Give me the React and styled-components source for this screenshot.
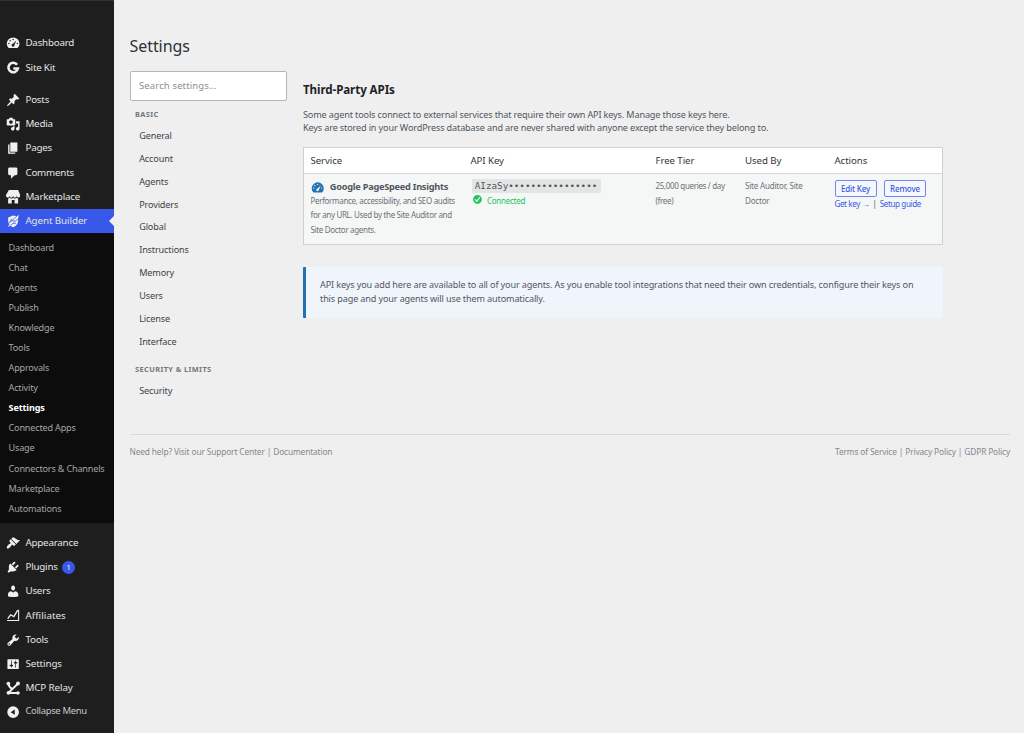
import React from "react";
import styled, { createGlobalStyle } from "styled-components";

const Global = createGlobalStyle`
  * { box-sizing: border-box; }
  body { margin: 0; background: #efefef; font-family: "Noto Sans", "Open Sans", sans-serif; color: #50575e; }
  #root { height: 733px; overflow: hidden; }
`;

const ICONS = {
  dashboard: "M3.76 17h12.48A9 9 0 0 0 19 11a9 9 0 0 0-18 0 9 9 0 0 0 2.760 6zM10 4a1 1 0 1 1 0 2 1 1 0 0 1 0-2zM4 9.500a1 1 0 1 1 0 2 1 1 0 0 1 0-2zM16 9.500a1 1 0 1 1 0 2 1 1 0 0 1 0-2zM5.800 5.600a1 1 0 1 1 0 2 1 1 0 0 1 0-2zM14.600 6.200L11.800 12.600a2 2 0 1 1-1.900-1.600z",
  post: "M10.44 3.02l1.82-1.82 6.36 6.35-1.83 1.82c-1.05-.68-2.48-.57-3.41.36l-.75.75c-.92.93-1.04 2.35-.35 3.41l-1.83 1.82-2.41-2.41-2.8 2.79c-.42.42-3.38 2.71-3.8 2.29s1.86-3.39 2.28-3.81l2.79-2.79L4.1 9.36l1.83-1.82c1.05.69 2.48.57 3.4-.36l.75-.75c.93-.92 1.05-2.35.36-3.41z",
  media: "M13 11V4c0-.55-.45-1-1-1h-1.67L9 1H5L3.67 3H2c-.55 0-1 .45-1 1v7c0 .55.45 1 1 1h10c.55 0 1-.45 1-1zM7 4.500c1.380 0 2.500 1.120 2.500 2.500S8.380 9.500 7 9.500 4.500 8.380 4.500 7 5.620 4.500 7 4.500zM14 6h5v10.500c0 1.380-1.120 2.500-2.500 2.500S14 17.880 14 16.500s1.120-2.500 2.500-2.500c.17 0 .34.02.5.05V9h-3V6zm-4 8.050V13h2v3.500c0 1.380-1.120 2.500-2.500 2.500S7 17.880 7 16.500 8.120 14 9.500 14c.17 0 .34.02.5.05z",
  page: "M6 15V2h10v13H6zm-1 1h8v2H3V5h2v11z",
  comments: "M5 2h9c1.1 0 2 .9 2 2v7c0 1.1-.9 2-2 2h-2l-5 5v-5H5c-1.1 0-2-.9-2-2V4c0-1.1.9-2 2-2z",
  store: "M1 10c.41.29.96.43 1.5.43s1.09-.14 1.5-.43c.62-.46 1-1.17 1-2 0 .83.37 1.54 1 2 .41.29.96.43 1.5.43s1.09-.14 1.5-.43c.62-.46 1-1.17 1-2 0 .83.37 1.54 1 2 .41.29.96.43 1.510.43.54 0 1.080-.14 1.490-.43.62-.46 1-1.170 1-2 0 .83.37 1.540 1 2 .41.29.96.43 1.500.43.55 0 1.090-.14 1.500-.43.63-.46 1-1.170 1-2V7l-3-7H4L0 7v1c0 .83.37 1.540 1 2zm2 8.990h5v-5h4v5h5v-7c-.37-.05-.72-.22-1-.43-.63-.45-1-.73-1-1.560 0 .83-.38 1.110-1 1.560-.41.3-.95.43-1.490.44-.55 0-1.100-.14-1.510-.44-.63-.45-1-.73-1-1.560 0 .83-.38 1.110-1 1.560-.41.3-.95.43-1.500.44-.54 0-1.090-.14-1.500-.44-.63-.45-1-.73-1-1.570 0 .84-.38 1.120-1 1.570-.29.21-.63.38-1 .44v6.990z",
  appearance: "M14.48 11.06L7.41 3.99l1.5-1.5c.5-.56 2.3-.47 3.51.32 1.21.8 1.43 1.28 2.91 2.1 1.18.64 2.45 1.26 4.45.85zm-.71.71L6.7 4.7 4.93 6.47c-.39.39-.39 1.02 0 1.41l1.06 1.06c.39.39.39 1.03 0 1.42-.6.6-1.43 1.11-2.21 1.69-.35.26-.7.53-1.01.84C1.43 14.23.4 16.08 1.4 17.07c.99 1 2.84-.03 4.18-1.36.31-.31.58-.66.85-1.02.57-.78 1.08-1.61 1.69-2.21.39-.39 1.02-.39 1.41 0l1.06 1.06c.39.39 1.02.39 1.41 0z",
  plugins: "M13.11 4.36L9.87 7.6 8 5.73l3.24-3.24c.35-.34 1.05-.2 1.56.32.52.51.66 1.21.31 1.55zm-8 1.77l.91-1.12 9.01 9.01-1.19.84c-.71.71-2.63 1.16-3.82 1.16H6.14L4.9 17.26c-.59.59-1.54.59-2.12 0-.59-.58-.59-1.53 0-2.12l1.24-1.24v-3.88c0-1.13.4-3.19 1.09-3.89zm7.26 3.97l3.24-3.24c.34-.35 1.04-.21 1.55.31.52.51.66 1.21.31 1.55l-3.24 3.25z",
  users: "M10 9.25c-2.27 0-2.73-3.44-2.73-3.44C7 4.02 7.82 2 9.97 2c2.16 0 2.98 2.02 2.71 3.81 0 0-.41 3.44-2.68 3.44zm0 2.57L12.72 10c2.39 0 4.52 2.33 4.52 4.53v2.49s-3.65 1.13-7.24 1.13c-3.65 0-7.24-1.13-7.24-1.13v-2.49c0-2.25 1.94-4.48 4.47-4.48z",
  tools: "M16.68 9.77c-1.34 1.34-3.3 1.67-4.95.99l-5.41 6.52c-.99.99-2.59.99-3.58 0s-.99-2.59 0-3.57l6.52-5.42c-.68-1.65-.35-3.61.99-4.95 1.28-1.28 3.12-1.62 4.72-1.06l-2.89 2.89 2.82 2.82 2.86-2.87c.53 1.58.18 3.39-1.08 4.65zM3.81 16.21c.4.39 1.04.39 1.43 0 .4-.4.4-1.04 0-1.43-.39-.4-1.03-.4-1.43 0-.39.39-.39 1.03 0 1.43z",
  settings: "M18 16V4c0-.55-.45-1-1-1H3c-.55 0-1 .45-1 1v12c0 .55.45 1 1 1h14c.55 0 1-.45 1-1zM8 11h1c.55 0 1 .45 1 1s-.45 1-1 1H8v1.5c0 .28-.22.5-.5.5s-.5-.22-.5-.5V13H6c-.55 0-1-.45-1-1s.45-1 1-1h1V5.5c0-.28.22-.5.5-.5s.5.22.5.5V11zm5-2h-1c-.55 0-1-.45-1-1s.45-1 1-1h1V5.5c0-.28.22-.5.5-.5s.5.22.5.5V7h1c.55 0 1 .45 1 1s-.45 1-1 1h-1v5.5c0 .28-.22.5-.5.5s-.5-.22-.5-.5V9z",
  check: "M10 2c-4.42 0-8 3.58-8 8s3.58 8 8 8 8-3.58 8-8-3.58-8-8-8zm-.615 12.66h-1.34l-3.24-4.54 1.341-1.25 2.569 2.4 5.141-5.931 1.34.94-5.811 8.381z",
  collapse: "M10 1.800a8.200 8.200 0 1 0 0 16.400 8.200 8.200 0 0 0 0-16.400zM12.300 6.300v7.400L6.600 10z",
};

const Svg = styled.svg`
  width: ${(p) => p.$size || 14.25}px;
  height: ${(p) => p.$size || 14.25}px;
  flex: none;
  display: block;
  fill: currentColor;
`;

function Icon({ name, size }) {
  let body = <path fillRule="evenodd" d={ICONS[name]} />;
  if (name === "google")
    body = (
      <path
        d="M15.600 5.200A6.700 6.700 0 1 0 16.700 10.600H10.300"
        fill="none"
        stroke="currentColor"
        strokeWidth="3.600"
      />
    );
  if (name === "agent")
    body = (
      <>
        <path d="M10 2l7 1.500v6c0 4.500-3 7.500-7 9-4-1.500-7-4.500-7-9V5z" />
        <g fill="none" stroke="#3858e9" strokeWidth="1">
          <path d="M2 14.500L16.500 2M5.500 11.500l2.300-5M7.800 9.600h5M4 18L18 6M10 13.200h4" />
        </g>
        <path d="M2 18.500l3-4 1.500 1.500zM15 3l3.500-1.500-1.500 3.500z" />
      </>
    );
  if (name === "chart")
    body = (
      <g fill="none" stroke="currentColor" strokeWidth="1.900">
        <path d="M2.500 15l4-5.500 4.500 2.500 5.500-9" />
        <path d="M1.500 17.600h16.200V2.500" strokeWidth="1.500" />
      </g>
    );
  if (name === "relay")
    body = (
      <>
        <path
          d="M3.200 3.500c.5 3 1.500 6 5.800 7.800M3.500 16.500L17 3.500M3.500 16.800H17"
          fill="none"
          stroke="currentColor"
          strokeWidth="2.600"
        />
        <circle cx="3.300" cy="3.500" r="2.600" />
        <circle cx="16.800" cy="3.500" r="2.700" />
        <circle cx="3.500" cy="16.600" r="2.700" />
        <circle cx="16.800" cy="16.800" r="2.500" />
      </>
    );
  return (
    <Svg viewBox="0 0 20 20" $size={size}>
      {body}
    </Svg>
  );
}

const Page = styled.div`
  display: flex;
  width: 1024px;
  height: 733px;
`;

const Sidebar = styled.nav`
  width: 114px;
  flex: none;
  background: #1e1e1e;
  padding-top: 30.300px;
  border-top: 1px solid #333;
`;

const MenuItem = styled.div`
  position: relative;
  height: ${(p) => p.$h || 24.25}px;
  margin-top: ${(p) => p.$gap || 0}px;
  padding-left: 5.800px;
  display: flex;
  align-items: center;
  gap: 5.400px;
  background: ${(p) => (p.$active ? "#3858e9" : "transparent")};
  color: #f0f0f1;
`;

const MenuLabel = styled.span`
  margin-top: ${(p) => (p.$dim ? -1.5 : 0)}px;
  font-size: ${(p) => (p.$dim ? 9.5 : 9.8)}px;
  line-height: 14px;
  letter-spacing: ${(p) => p.$ls ?? (p.$dim ? -0.35 : -0.22)}px;
  color: ${(p) => (p.$dim ? "#c5c8cb" : "#e4e4e5")};
  white-space: nowrap;
`;

const Pointer = styled.i`
  position: absolute;
  right: 0;
  top: 6.500px;
  border: 5.700px solid transparent;
  border-right-color: #efefef;
  border-left: 0;
`;

const Badge = styled.span`
  width: 13px;
  height: 13px;
  margin-left: -1px;
  border-radius: 50%;
  background: #3858e9;
  color: #fff;
  font-size: 7.500px;
  line-height: 12.500px;
  text-align: center;
`;

const SubMenu = styled.div`
  background: #0c0c0c;
  padding: 4.700px 0 4.200px 8.500px;
`;

const SubItem = styled.div`
  height: 20.050px;
  line-height: 20px;
  font-size: 9.100px;
  letter-spacing: ${(p) => (p.$active ? -0.13 : -0.18)}px;
  font-weight: ${(p) => (p.$active ? 700 : 400)};
  color: ${(p) => (p.$active ? "#fff" : "#a5a6a7")};
  white-space: nowrap;
`;

const Content = styled.main`
  flex: 1;
  padding: 36px 14px 0 15.500px;
`;

const Title = styled.h1`
  margin: 0;
  font-size: 16px;
  font-weight: 400;
  line-height: 20px;
  letter-spacing: -0.060px;
  color: #2c3338;
`;

const Columns = styled.div`
  display: flex;
  height: 377.500px;
`;

const SettingsNav = styled.aside`
  width: 157.500px;
  margin-top: 15px;
  flex: none;
`;

const Search = styled.div`
  height: 29.500px;
  border: 1px solid #b4b6b8;
  border-radius: 2px;
  background: #fff;
  padding-left: 8.500px;
  font-size: 9.500px;
  line-height: 28px;
  letter-spacing: 0.130px;
  color: #8b8f94;
`;

const GroupTitle = styled.h3`
  margin: ${(p) => p.$top}px 0 0 5.500px;
  font-size: 7.400px;
  font-weight: 700;
  line-height: 12px;
  letter-spacing: 0.400px;
  color: #72777c;
`;

const NavLink = styled.div`
  height: 22.900px;
  padding-left: 9.700px;
  font-size: 9.100px;
  line-height: 22.900px;
  letter-spacing: -0.140px;
  color: #3c434a;
`;

const NavList = styled.div`
  padding-top: 4.900px;
`;

const Panel = styled.section`
  width: 640px;
  margin-left: 16px;
  padding-top: 25.500px;
`;

const Heading = styled.h2`
  margin: 0;
  font-size: 11.600px;
  font-weight: 700;
  line-height: 16px;
  letter-spacing: -0.090px;
  color: #1d2327;
`;

const Copy = styled.p`
  margin: 0;
  font-size: 9.100px;
  line-height: 13.600px;
  letter-spacing: -0.140px;
  color: #50575e;
  white-space: nowrap;
`;

const Intro = styled.div`
  padding: 10.400px 0 12.100px;
`;

const Table = styled.div`
  border: 1px solid #cfd1d3;
  background: #f5f7f6;
`;

const Row = styled.div`
  display: grid;
  grid-template-columns: 160px 185px 89.500px 89.500px 1fr;
  padding: 0 6.500px;
`;

const HeadRow = styled(Row)`
  height: 25.500px;
  background: #fff;
  border-bottom: 1px solid #d5d7d9;
  font-size: 9.700px;
  line-height: 26px;
  letter-spacing: -0.090px;
  color: #32373c;
`;

const BodyRow = styled(Row)`
  height: 70.500px;
`;

const ServiceName = styled.div`
  display: flex;
  align-items: center;
  gap: 5.500px;
  height: 15px;
  margin-top: 5px;
  padding-left: 0.300px;
  color: #2271b1;
`;

const Strong = styled.strong`
  font-size: 9.200px;
  font-weight: 700;
  letter-spacing: -0.240px;
  color: #50575e;
  white-space: nowrap;
`;

const ServiceIcon = styled.span`
  padding-top: 3px;
`;

const Small = styled.div`
  font-size: 8px;
  line-height: 14.700px;
  letter-spacing: ${(p) => p.$ls ?? -0.33}px;
  padding-top: ${(p) => p.$top || 0}px;
  color: #6c7278;
  white-space: nowrap;
`;

const KeyCode = styled.code`
  display: block;
  width: 129.500px;
  height: 14px;
  margin: 5px 0 0 1px;
  padding-left: 3.300px;
  background: #e3e5e5;
  font-family: "DejaVu Sans Mono", monospace;
  font-size: 9.260px;
  line-height: 14px;
  color: #50575e;
`;

const Status = styled.div`
  display: flex;
  align-items: center;
  gap: 4px;
  padding-left: 1.500px;
  height: 14px;
  color: #22c55e;
  font-size: 8px;
  line-height: 12px;
  letter-spacing: -0.270px;

  span { padding-top: 3px; }
`;

const Buttons = styled.div`
  display: flex;
  gap: 7.500px;
  margin-top: 6px;
`;

const Button = styled.button`
  width: 42px;
  height: 17px;
  padding: 0;
  border: 1px solid #6f86ef;
  border-radius: 2px;
  background: #f6f7fb;
  color: #3858e9;
  font: 500 8px/15px "Noto Sans", sans-serif;
  letter-spacing: -0.150px;
`;

const Links = styled.div`
  display: flex;
  gap: 3.200px;
  font-size: 8px;
  line-height: 13px;
  letter-spacing: -0.360px;
  color: #3858e9;
  white-space: nowrap;
`;

const Divider = styled.span`
  color: #50575e;
`;

const Notice = styled.div`
  height: 51px;
  margin-top: 22px;
  padding: 11px 0 0 14px;
  border-left: 3px solid #2271b1;
  background: #f0f5fc;
  border-radius: 1px;
`;

const Footer = styled.footer`
  display: flex;
  justify-content: space-between;
  border-top: 1px solid #d8d9da;
  padding-top: 9.500px;
  font-size: 8.400px;
  line-height: 15px;
  letter-spacing: -0.160px;
  color: #85898d;
`;

const SUB = ["Dashboard", "Chat", "Agents", "Publish", "Knowledge", "Tools", "Approvals", "Activity", "Settings", "Connected Apps", "Usage", "Connectors & Channels", "Marketplace", "Automations"];
const NAV = ["General", "Account", "Agents", "Providers", "Global", "Instructions", "Memory", "Users", "License", "Interface"];
const TOP = [
  ["dashboard", "Dashboard"],
  ["google", "Site Kit"],
  ["post", "Posts", 8],
  ["media", "Media"],
  ["page", "Pages"],
  ["comments", "Comments"],
  ["store", "Marketplace"],
];
const BOTTOM = [
  ["appearance", "Appearance", 7.8],
  ["plugins", "Plugins"],
  ["users", "Users"],
  ["chart", "Affiliates", 0, 0.06],
  ["tools", "Tools"],
  ["settings", "Settings", 0, -0.1],
  ["relay", "MCP Relay", 0, -0.1],
];

const renderItem = ([icon, label, gap, ls]) => (
  <MenuItem key={label} $gap={gap}>
    <Icon name={icon} />
    <MenuLabel $ls={ls}>{label}</MenuLabel>
    {label === "Plugins" && <Badge>1</Badge>}
  </MenuItem>
);

export default function App() {
  return (
    <>
      <Global />
      <Page>
        <Sidebar>
          {TOP.map(renderItem)}
          <MenuItem $active>
            <Icon name="agent" />
            <MenuLabel $ls={-0.09}>Agent Builder</MenuLabel>
            <Pointer />
          </MenuItem>
          <SubMenu>
            {SUB.map((s) => (
              <SubItem key={s} $active={s === "Settings"}>{s}</SubItem>
            ))}
          </SubMenu>
          {BOTTOM.map(renderItem)}
          <MenuItem $h={23}>
            <Icon name="collapse" />
            <MenuLabel $dim>Collapse Menu</MenuLabel>
          </MenuItem>
        </Sidebar>
        <Content>
          <Title>Settings</Title>
          <Columns>
            <SettingsNav>
              <Search>Search settings…</Search>
              <GroupTitle $top={7.5}>BASIC</GroupTitle>
              <NavList>
                {NAV.map((n) => (
                  <NavLink key={n}>{n}</NavLink>
                ))}
              </NavList>
              <GroupTitle $top={9}>SECURITY &amp; LIMITS</GroupTitle>
              <NavList>
                <NavLink>Security</NavLink>
              </NavList>
            </SettingsNav>
            <Panel>
              <Heading>Third-Party APIs</Heading>
              <Intro>
                <Copy>Some agent tools connect to external services that require their own API keys. Manage those keys here.</Copy>
                <Copy>Keys are stored in your WordPress database and are never shared with anyone except the service they belong to.</Copy>
              </Intro>
              <Table>
                <HeadRow>
                  <span>Service</span>
                  <span>API Key</span>
                  <span>Free Tier</span>
                  <span>Used By</span>
                  <span>Actions</span>
                </HeadRow>
                <BodyRow>
                  <div>
                    <ServiceName>
                      <ServiceIcon>
                        <Icon name="dashboard" size={13.5} />
                      </ServiceIcon>
                      <Strong>Google PageSpeed Insights</Strong>
                    </ServiceName>
                    <Small>
                      Performance, accessibility, and SEO audits
                      <br />
                      for any URL. Used by the Site Auditor and
                      <br />
                      Site Doctor agents.
                    </Small>
                  </div>
                  <div>
                    <KeyCode>AIzaSy••••••••••••••••</KeyCode>
                    <Status>
                      <Icon name="check" size={11} />
                      <span>Connected</span>
                    </Status>
                  </div>
                  <Small $top={5.5}>
                    25,000 queries / day
                    <br />
                    (free)
                  </Small>
                  <Small $top={5.5} $ls={-0.18}>
                    Site Auditor, Site
                    <br />
                    Doctor
                  </Small>
                  <div>
                    <Buttons>
                      <Button>Edit Key</Button>
                      <Button>Remove</Button>
                    </Buttons>
                    <Links>
                      <span>Get key →</span>
                      <Divider>|</Divider>
                      <span>Setup guide</span>
                    </Links>
                  </div>
                </BodyRow>
              </Table>
              <Notice>
                <Copy>API keys you add here are available to all of your agents. As you enable tool integrations that need their own credentials, configure their keys on</Copy>
                <Copy>this page and your agents will use them automatically.</Copy>
              </Notice>
            </Panel>
          </Columns>
          <Footer>
            <span>Need help? Visit our Support Center | Documentation</span>
            <span>Terms of Service | Privacy Policy | GDPR Policy</span>
          </Footer>
        </Content>
      </Page>
    </>
  );
}
